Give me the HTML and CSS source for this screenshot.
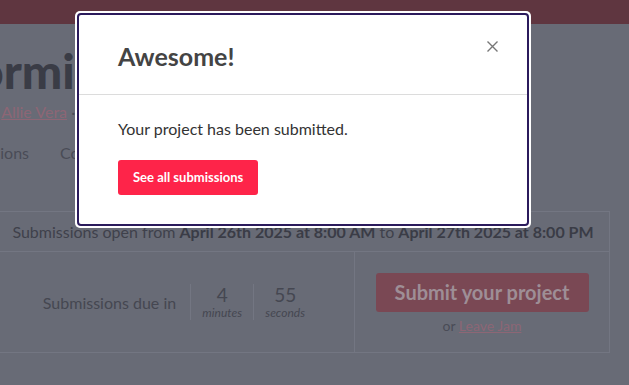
FILE: index.html
```html
<!DOCTYPE html>
<html>
<head>
	<title>Platforming Jam</title>
	<link rel="stylesheet" href="styles.css">
</head>
<body>
	<div class="topbar"></div>
	<div class="page">
		<h1 class="title">Platforming Jam</h1>
		<div class="byline">by <a href="#">Allie Vera</a> · hosted</div>
		<div class="tabs">
			<span>Submissions</span>
			<span>Community</span>
		</div>
		<div class="box">
			<div class="open">Submissions open from <b>April 26th 2025 at 8:00 AM</b> to <b>April 27th 2025 at 8:00 PM</b></div>
			<div class="row">
				<div class="cell due">
					<span class="due_label">Submissions due in</span>
					<div class="unit"><span class="num">4</span><span class="lbl">minutes</span></div>
					<div class="unit"><span class="num">55</span><span class="lbl">seconds</span></div>
				</div>
				<div class="cell act">
					<span class="submit">Submit your project</span>
					<div class="leave">or <a href="#">Leave Jam</a></div>
				</div>
			</div>
		</div>
	</div>

	<div class="modal">
		<div class="modal_inner">
			<div class="modal_head">
				<h2>Awesome!</h2>
				<svg class="close" width="11" height="11" viewBox="0 0 11 11">
					<path d="M0.5 0.5 L10.5 10.5 M10.5 0.5 L0.5 10.5" stroke="#777" stroke-width="1.4" fill="none"/>
				</svg>
			</div>
			<div class="modal_body">
				<p>Your project has been submitted.</p>
				<span class="btn">See all submissions</span>
			</div>
		</div>
	</div>
</body>
</html>
```

FILE: styles.css
```css
body {
	margin: 0;
	background: #686b76;
	font-family: Lato, "Liberation Sans", sans-serif;
	overflow: hidden;
	color: #3d3f49;
}
.topbar {
	height: 24px;
	background: #5f3640;
}
.page {
	width: 614px;
	margin-left: -4px;
}
.title {
	margin: 0;
	margin-left: -120px;
	font-size: 48px; font-weight: 900;
	line-height: 58px;
	padding-top: 18px;
	color: #3a3c46;
	white-space: nowrap;
}
.byline {
	margin-left: -15px;
	margin-top: 2px;
	font-size: 16px;
	color: #4a4c56;
}
.byline a {
	color: #8d6675;
}
.tabs {
	margin-top: 22px;
	margin-left: -53px;
	font-size: 16px;
	color: #4a4c56;
	display: flex; gap: 31px;
}
.box {
	margin-top: 49px;
	border: 1px solid #737682;
}
.open {
	height: 39px;
	line-height: 39px;
	text-align: center;
	font-size: 16px;
	color: #3f414b;
	border-bottom: 1px solid #737682;
}
.open b {
	font-weight: 700;
	color: #3a3c46;
}
.row {
	display: flex;
	height: 100px;
}
.cell {
	display: flex;
	align-items: center;
	justify-content: center;
}
.due {
	width: 358px;
	border-right: 1px solid #737682;
	color: #454751;
	padding-left: 8px;
	box-sizing: border-box;
}
.due_label {
	font-size: 16px;
	margin-right: 14px;
}
.unit {
	display: flex; flex-direction: column;
	align-items: center;
	border-left: 1px solid #737682;
	padding: 0 10px;
	min-width: 42px;
}
.num {
	font-size: 19px; line-height: 21px;
}
.lbl {
	font-size: 12px; font-style: italic;
}
.act {
	flex: 1;
	flex-direction: column;
	padding-top: 2px;
}
.submit {
	display: block;
	width: 213px; height: 39px;
	line-height: 39px;
	text-align: center;
	background: #7a4854;
	color: #9e8e96;
	font-size: 20px; font-weight: 700;
	border-radius: 3px;
}
.leave {
	margin-top: 5px;
	font-size: 14px;
	color: #4a4c56;
}
.leave a {
	color: #8d6675;
}

.modal {
	position: absolute;
	left: 75px; top: 11px;
	width: 456px;
	background: #fff;
	border-radius: 5px;
	padding: 2px;
	box-sizing: border-box;
}
.modal_inner {
	border: 2px solid #2b1b5c;
	border-radius: 4px;
	background: #fff;
}
.modal_head {
	height: 79px;
	padding: 0 29px 0 39px;
	border-bottom: 1px solid #dcdcdc;
	display: flex;
	align-items: center;
	justify-content: space-between;
}
.modal_head h2 {
	margin: 0;
	margin-top: 2px;
	font-size: 25px; font-weight: 700;
	color: #444;
}
.close {
	margin-top: -16px;
}
.modal_body {
	padding: 24px 39px 29px;
}
.modal_body p {
	margin: 0 0 22px;
	font-size: 16px;
	color: #333;
}
.btn {
	display: inline-block;
	height: 35px; line-height: 35px;
	padding: 0 15px;
	background: #fe2449;
	color: #fff;
	font-size: 13px; font-weight: 700;
	border-radius: 3px;
}
```
